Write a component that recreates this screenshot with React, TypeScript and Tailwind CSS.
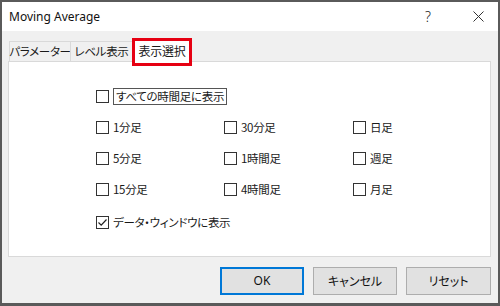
import React from 'react'

const jp = "font-['Noto_Sans_CJK_JP','Noto_Sans',sans-serif] [font-feature-settings:'palt'] whitespace-nowrap"

function Box({ checked }: { checked?: boolean }) {
  return (
    <span className="flex h-[13px] w-[13px] shrink-0 items-center justify-center border border-[#333333] bg-white">
      {checked && (
        <svg width="11" height="11" viewBox="0 0 11 11">
          <path d="M1.5 5.5 L4.2 8.2 L9.5 2.5" fill="none" stroke="#222" strokeWidth="1.2" />
        </svg>
      )}
    </span>
  )
}

function Check({ label, checked, focus }: { label: string; checked?: boolean; focus?: boolean }) {
  return (
    <div className="flex h-[31px] items-center">
      <Box checked={checked} />
      <span
        className={`ml-[4px] text-[11.5px] leading-[15px] tracking-[-0.3px] text-[#1a1a1a] ${jp} ${
          focus ? 'border border-[#555] px-[2px]' : ''
        }`}
      >
        {label}
      </span>
    </div>
  )
}

const grid = [
  ['1分足', '30分足', '日足'],
  ['5分足', '1時間足', '週足'],
  ['15分足', '4時間足', '月足'],
]

export default function App() {
  return (
    <div className="flex h-[306px] w-[500px] flex-col border-t-2 border-r-2 border-b-[3px] border-l-2 border-[#5a5a5a] bg-[#f0f0f0]">
      <div className="flex h-[29px] shrink-0 items-center bg-white">
        <span className="ml-[7px] font-['Noto_Sans',sans-serif] text-[12px] text-[#111]">Moving Average</span>
        <span className="ml-auto mr-[42px] font-['Noto_Sans',sans-serif] text-[14px] font-light text-[#222]">?</span>
        <svg className="mr-[14px]" width="11" height="11" viewBox="0 0 11 11">
          <path d="M0.5 0.5 L10.5 10.5 M10.5 0.5 L0.5 10.5" stroke="#333" strokeWidth="1" />
        </svg>
      </div>

      <div className="flex flex-1 flex-col pl-[6px] pr-[7px] pt-[8px]">
        <div className="flex h-[22px] items-end pl-[1px]">
          <div className={`flex h-[20px] w-[61px] items-center justify-center border-t border-l border-[#d9d9d9] text-[11.5px] tracking-[-0.3px] text-[#1a1a1a] ${jp}`}>
            パラメーター
          </div>
          <div className={`flex h-[20px] w-[62px] items-center justify-center border-t border-l border-[#d9d9d9] text-[11.5px] tracking-[-0.3px] text-[#1a1a1a] ${jp}`}>
            レベル表示
          </div>
          <div className={`relative z-10 -mb-[1px] flex h-[23px] w-[60px] items-center justify-center border-t border-x border-[#d9d9d9] bg-white pb-[1px] text-[12px] tracking-[-0.2px] text-[#1a1a1a] ${jp}`}>
            表示選択
            <div className="absolute -left-[1px] -right-[1px] -top-[2px] -bottom-[4px] border-[3px] border-[#e60012]" />
          </div>
        </div>

        <div className="h-[196px] border border-[#d9d9d9] bg-white pl-[87px] pt-[19px]">
          <Check label="すべての時間足に表示" focus />
          {grid.map((row) => (
            <div key={row[0]} className="grid grid-cols-[128px_129px_80px]">
              {row.map((l) => (
                <Check key={l} label={l} />
              ))}
            </div>
          ))}
          <div className="mt-[2px]">
            <Check label="データ・ウィンドウに表示" checked />
          </div>
        </div>

        <div className="mt-[10px] flex justify-end gap-[9px]">
          <button className="h-[28px] w-[84px] border-2 border-[#0078d7] bg-[#e1e1e1] font-['Noto_Sans',sans-serif] text-[12px] text-[#111]">
            OK
          </button>
          <button className={`h-[28px] w-[84px] border border-[#adadad] bg-[#e1e1e1] text-[12px] text-[#111] ${jp}`}>
            キャンセル
          </button>
          <button className={`h-[28px] w-[85px] border border-[#adadad] bg-[#e1e1e1] text-[12px] text-[#111] ${jp}`}>
            リセット
          </button>
        </div>
      </div>
    </div>
  )
}
